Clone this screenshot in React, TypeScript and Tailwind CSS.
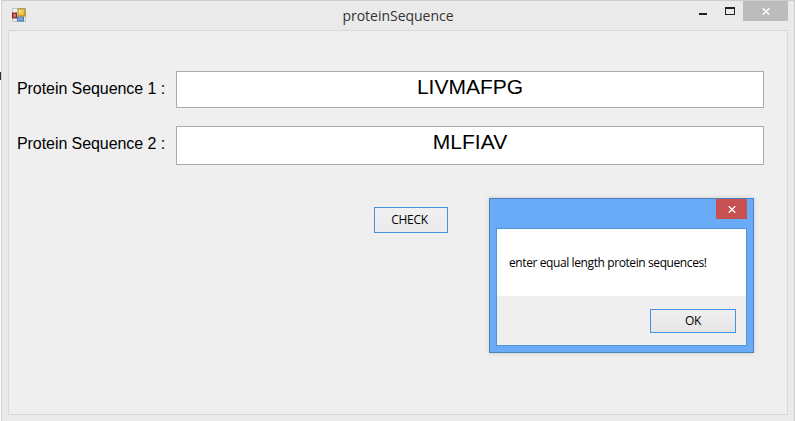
function AppIcon() {
  return (
    <svg className="block h-[14px] w-[14px]" viewBox="0 0 14 14" aria-hidden="true">
      <defs>
        <linearGradient id="gold" x1="0" y1="0" x2="1" y2="1">
          <stop offset="0" stopColor="#fff0a0" />
          <stop offset="1" stopColor="#e5aa08" />
        </linearGradient>
      </defs>
      <rect x="0.5" y="0.5" width="13" height="13" fill="#f1f1f1" stroke="#c3c3c3" />
      <path d="M5.5 8.5V13" stroke="#c3c3c3" />
      <rect x="5.5" y="9" width="6" height="4" fill="#7aa5dd" stroke="#4d79b5" />
      <rect x="0.5" y="5" width="4" height="5" fill="#bd4848" stroke="#8c2a2a" />
      <rect x="2" y="6.5" width="1.4" height="2" fill="#eda0a0" />
      <rect x="6" y="1" width="7" height="7" fill="url(#gold)" stroke="#a8801c" />
    </svg>
  );
}

function CloseGlyph() {
  return (
    <svg className="block h-[7px] w-2" viewBox="0 0 8 7" aria-hidden="true">
      <path d="M0.7 0.3L7.3 6.7M7.3 0.3L0.7 6.7" stroke="#fff" strokeWidth="1.4" fill="none" />
    </svg>
  );
}

function TitleBar() {
  return (
    <header className="flex h-[29px] shrink-0 items-start">
      <div className="w-[91px] pt-[7px] pl-[10px]">
        <AppIcon />
      </div>
      <h1 className="flex-1 pt-[5px] pl-3 text-center font-['Open_Sans','Noto_Sans',sans-serif] text-[14px] leading-5 tracking-[-0.02px] text-[#333]">
        proteinSequence
      </h1>
      <div className="flex w-[103px]">
        <button className="flex w-6 pt-3 pl-2" aria-label="Minimize">
          <span className="h-[2px] w-2 bg-[#222]" />
        </button>
        <button className="flex w-[28px] pt-[6px] pl-[10px]" aria-label="Maximize">
          <span className="h-2 w-[10px] border border-t-2 border-[#222]" />
        </button>
        <button className="flex h-5 w-[45px] items-center justify-center bg-[#bcbcbc] pt-px pl-px" aria-label="Close">
          <CloseGlyph />
        </button>
      </div>
    </header>
  );
}

function MessageBox() {
  return (
    <div
      role="dialog"
      className="absolute top-[198px] left-[489px] flex h-[155px] w-[265px] flex-col border border-[#4d81bd] bg-[#6aabf7] px-[6px] pb-[6px] shadow-[0_0_5px_rgba(0,0,0,0.15)]"
    >
      <div className="flex h-[29px] shrink-0 justify-end">
        <button className="flex h-5 w-[31px] items-center justify-center bg-[#c75050] pt-px pl-px" aria-label="Close">
          <CloseGlyph />
        </button>
      </div>
      <div className="flex flex-1 flex-col border border-[#5293d8] bg-[#efefef]">
        <div className="flex h-[67px] shrink-0 items-center bg-white pt-px pl-3 font-['Open_Sans','Noto_Sans',sans-serif] text-[12px] text-black">
          <span className="whitespace-nowrap tracking-[-0.4px]">enter equal length protein sequences!</span>
        </div>
        <div className="flex flex-1 justify-end pt-[13px] pr-[10px]">
          <button className="flex h-6 w-[86px] items-center justify-center border border-[#4294df] bg-linear-to-b from-[#f0f0f0] to-[#e5e5e5] font-['Open_Sans','Noto_Sans',sans-serif] text-[12px] tracking-[-0.4px] text-black">
            OK
          </button>
        </div>
      </div>
    </div>
  );
}

export default function App() {
  return (
    <div className="relative flex h-[421px] w-[795px] overflow-hidden bg-[#eaeaea] font-['Liberation_Sans',Arial,sans-serif] text-black">
      <div className="w-px shrink-0 bg-white pt-[72px]">
        <div className="h-2 w-px bg-[#333]" />
      </div>
      <div className="flex flex-1 flex-col border border-b-0 border-[#cdcdcd]">
        <TitleBar />
        <main className="mr-[6px] ml-[6px] flex h-[385px] shrink-0 flex-col border border-[#d8d8d8] bg-[#efefef] pt-10 pr-[23px] pl-2">
          <div className="flex h-[37px]">
            <label className="w-[159px] pt-[9px] text-[16px] leading-[18px] tracking-[-0.07px] whitespace-nowrap">
              Protein Sequence 1 :
            </label>
            <div className="flex-1 border border-[#ababab] bg-white pt-[3px] text-center text-[21px] leading-6">
              LIVMAFPG
            </div>
          </div>
          <div className="mt-[18px] flex h-[39px]">
            <label className="w-[159px] pt-[9px] text-[16px] leading-[18px] tracking-[-0.07px] whitespace-nowrap">
              Protein Sequence 2 :
            </label>
            <div className="flex-1 border border-[#ababab] bg-white pt-[3px] text-center text-[21px] leading-6">
              MLFIAV
            </div>
          </div>
          <button className="mt-[42px] ml-[357px] flex h-[26px] w-[74px] items-center justify-center border border-[#4294df] bg-linear-to-b from-[#f0f0f0] to-[#ebebeb] pr-[3px] font-['Open_Sans','Noto_Sans',sans-serif] text-[12px] tracking-[-0.3px]">
            CHECK
          </button>
        </main>
      </div>
      <MessageBox />
    </div>
  );
}
